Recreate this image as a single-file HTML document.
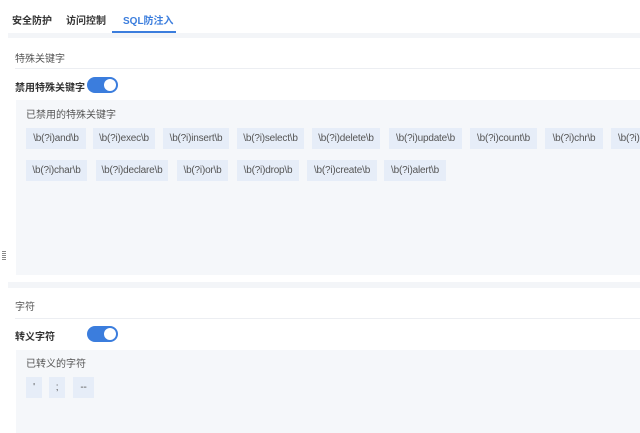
<!DOCTYPE html><html><head><meta charset="utf-8"><style>
body{margin:0;width:640px;height:433px;overflow:hidden;background:#f3f5f8;font-family:"Liberation Sans","Noto Sans CJK SC",sans-serif;position:relative}
.a{position:absolute}
.tab{font-size:10px;color:#333;top:12px;font-weight:bold}
.tag{position:absolute;background:#e6edf8;color:#555;font-size:10px;letter-spacing:-0.2px;height:21px;line-height:21px;text-align:center;white-space:nowrap;overflow:hidden}
.sw{position:absolute;width:31px;height:16px;border-radius:8px;background:#3b7ddd}
.sw:after{content:"";position:absolute;right:2px;top:2px;width:12px;height:12px;border-radius:50%;background:#fff}
</style></head><body>
<div class="a" style="left:0;top:0;width:640px;height:33px;background:#fff"></div>
<div class="a tab" style="left:12px">安全防护</div>
<div class="a tab" style="left:66px">访问控制</div>
<div class="a tab" style="left:123px;color:#3b7ddd">SQL防注入</div>
<div class="a" style="left:112px;top:31px;width:64px;height:2px;background:#3b7ddd"></div>
<div class="a" style="left:0;top:33px;width:8px;height:400px;background:#fff"></div>
<div class="a" style="left:2px;top:251px;width:4px;height:9px;background:repeating-linear-gradient(#888 0 1px,transparent 1px 2px)"></div>

<div class="a" style="left:8px;top:38px;width:632px;height:244px;background:#fff"></div>
<div class="a" style="left:15px;top:50px;font-size:10px;color:#555">特殊关键字</div>
<div class="a" style="left:15px;top:68px;width:625px;height:1px;background:#eceef2"></div>
<div class="a" style="left:15px;top:79px;font-size:10px;color:#333;font-weight:bold">禁用特殊关键字</div>
<div class="sw" style="left:87px;top:77px"></div>
<div class="a" style="left:16px;top:100px;width:624px;height:175px;background:#f5f7fa"></div>
<div class="a" style="left:26px;top:106px;font-size:10px;color:#555">已禁用的特殊关键字</div>
<div class="tag" style="left:26px;top:128px;width:60px">\b(?i)and\b</div>
<div class="tag" style="left:93px;top:128px;width:62px">\b(?i)exec\b</div>
<div class="tag" style="left:163px;top:128px;width:66px">\b(?i)insert\b</div>
<div class="tag" style="left:237px;top:128px;width:67px">\b(?i)select\b</div>
<div class="tag" style="left:312px;top:128px;width:68px">\b(?i)delete\b</div>
<div class="tag" style="left:389px;top:128px;width:73px">\b(?i)update\b</div>
<div class="tag" style="left:470px;top:128px;width:67px">\b(?i)count\b</div>
<div class="tag" style="left:545px;top:128px;width:58px">\b(?i)chr\b</div>
<div class="tag" style="left:611px;top:128px;width:60px;text-align:left;padding-left:7px">\b(?i)mid\b</div>
<div class="tag" style="left:26px;top:160px;width:61px">\b(?i)char\b</div>
<div class="tag" style="left:96px;top:160px;width:72px">\b(?i)declare\b</div>
<div class="tag" style="left:177px;top:160px;width:51px">\b(?i)or\b</div>
<div class="tag" style="left:237px;top:160px;width:62px">\b(?i)drop\b</div>
<div class="tag" style="left:307px;top:160px;width:70px">\b(?i)create\b</div>
<div class="tag" style="left:384px;top:160px;width:62px">\b(?i)alert\b</div>

<div class="a" style="left:8px;top:288px;width:632px;height:145px;background:#fff"></div>
<div class="a" style="left:15px;top:298px;font-size:10px;color:#555">字符</div>
<div class="a" style="left:15px;top:318px;width:625px;height:1px;background:#eceef2"></div>
<div class="a" style="left:15px;top:328px;font-size:10px;color:#333;font-weight:bold">转义字符</div>
<div class="sw" style="left:87px;top:326px"></div>
<div class="a" style="left:16px;top:350px;width:624px;height:83px;background:#f5f7fa"></div>
<div class="a" style="left:26px;top:355px;font-size:10px;color:#555">已转义的字符</div>
<div class="tag" style="left:26px;top:377px;width:16px">'</div>
<div class="tag" style="left:49px;top:377px;width:16px">;</div>
<div class="tag" style="left:73px;top:377px;width:21px">--</div>
</body></html>
